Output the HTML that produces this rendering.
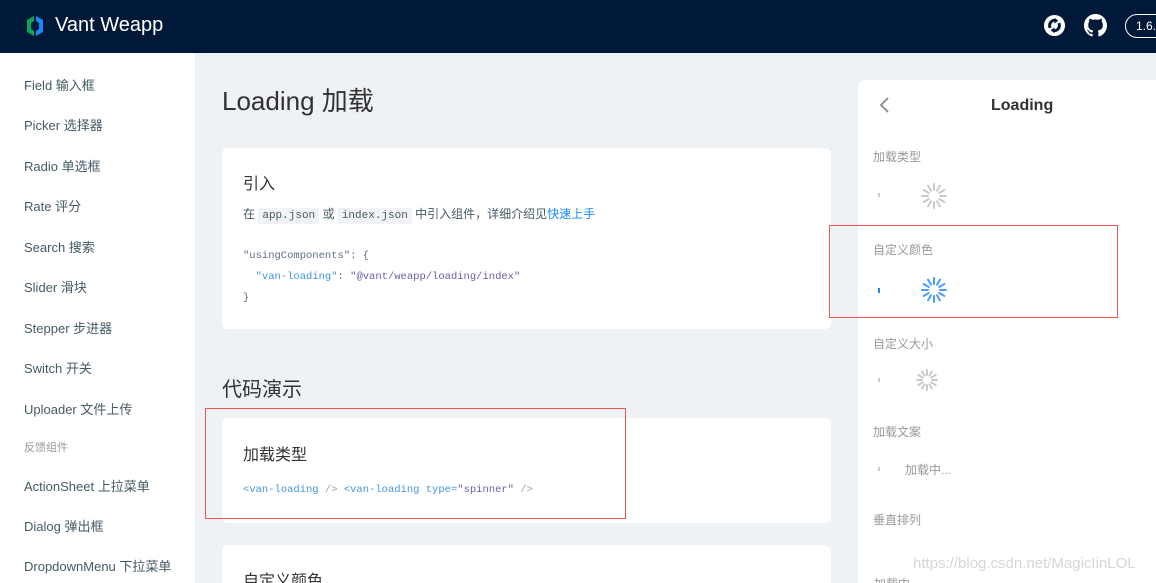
<!DOCTYPE html>
<html style="overflow:hidden;width:1156px;height:583px"><head><meta charset="utf-8"><style>
*{margin:0;padding:0;box-sizing:border-box}
body{width:1156px;height:583px;overflow:hidden;background:#eff2f5;font-family:"Liberation Sans","Noto Sans CJK SC",sans-serif;position:relative;color:#333}
.abs{position:absolute}
.hdr{left:0;top:0;width:1156px;height:53px;background:#001938}
.side{left:0;top:53px;width:195px;height:530px;background:#fff}
.si{position:absolute;left:24px;font-size:13px;color:#455a64;white-space:nowrap}
.card{position:absolute;background:#fff;border-radius:6px}
code{font-family:"Liberation Mono",monospace;font-size:11px;background:#f0f2f5;padding:2px 4px;color:#455a64}
.mono{font-family:"Liberation Mono",monospace;font-size:10.5px}
.t{color:#999;font-size:12px;position:absolute;left:15px}
.red{position:absolute;border:1px solid #f25454}
</style></head><body>
<div class="abs hdr"></div>
<svg class="abs" style="left:25px;top:15px" width="20" height="22" viewBox="0 0 20 22"><path d="M9 1 L2 5 L2 17 L9 21 L9 16 L6 14 L6 8 L9 6Z" fill="#07c160" opacity=".85"/><path d="M11 1 L18 5 L18 17 L11 21 L11 16 L14 14 L14 8 L11 6Z" fill="#1989fa"/></svg>
<div class="abs" style="left:55px;top:14px;color:#fff;font-size:20px">Vant Weapp</div>
<svg class="abs" style="left:1043px;top:14px" width="23" height="23" viewBox="0 0 24 24"><circle cx="12" cy="12" r="11" fill="#fff"/><path d="M12 5a7 7 0 0 0-6 10l3-1a4 4 0 0 1 3-6v2l4-3-4-3z M12 19a7 7 0 0 0 6-10l-3 1a4 4 0 0 1-3 6v-2l-4 3 4 3z" fill="#001938"/></svg>
<svg class="abs" style="left:1084px;top:14px" width="23" height="23" viewBox="0 0 16 16"><path fill="#fff" d="M8 0C3.58 0 0 3.58 0 8c0 3.54 2.29 6.53 5.47 7.59.4.07.55-.17.55-.38 0-.19-.01-.82-.01-1.49-2.01.37-2.53-.49-2.69-.94-.09-.23-.48-.94-.82-1.13-.28-.15-.68-.52-.01-.53.63-.01 1.08.58 1.23.82.72 1.21 1.87.87 2.33.66.07-.52.28-.87.51-1.07-1.78-.2-3.64-.89-3.64-3.95 0-.87.31-1.59.82-2.15-.08-.2-.36-1.02.08-2.12 0 0 .67-.21 2.2.82.64-.18 1.32-.27 2-.27.68 0 1.36.09 2 .27 1.53-1.04 2.2-.82 2.2-.82.44 1.1.16 1.92.08 2.12.51.56.82 1.27.82 2.15 0 3.07-1.87 3.75-3.65 3.95.29.25.54.73.54 1.48 0 1.07-.01 1.93-.01 2.2 0 .21.15.46.55.38A8.013 8.013 0 0 0 16 8c0-4.42-3.58-8-8-8z"/></svg>
<div class="abs" style="left:1125px;top:14px;width:50px;height:24px;border:1px solid #fff;border-radius:12px;color:#fff;font-size:12px;padding:4px 0 0 10px">1.6.</div>
<div class="abs side"></div>
<div class="si" style="top:75px">Field 输入框</div>
<div class="si" style="top:115px">Picker 选择器</div>
<div class="si" style="top:156px">Radio 单选框</div>
<div class="si" style="top:196px">Rate 评分</div>
<div class="si" style="top:237px">Search 搜索</div>
<div class="si" style="top:277px">Slider 滑块</div>
<div class="si" style="top:318px">Stepper 步进器</div>
<div class="si" style="top:358px">Switch 开关</div>
<div class="si" style="top:399px">Uploader 文件上传</div>
<div class="si" style="top:439px;font-size:11px;color:#999">反馈组件</div>
<div class="si" style="top:476px">ActionSheet 上拉菜单</div>
<div class="si" style="top:516px">Dialog 弹出框</div>
<div class="si" style="top:556px">DropdownMenu 下拉菜单</div>

<div class="abs" style="left:222px;top:81px;font-size:26px;color:#323233">Loading 加载</div>
<div class="card" style="left:222px;top:148px;width:609px;height:181px">
 <div class="abs" style="left:21px;top:22px;font-size:16px">引入</div>
 <div class="abs" style="left:21px;top:57px;font-size:12px;color:#455a64;white-space:nowrap">在 <code>app.json</code> 或 <code>index.json</code> 中引入组件，详细介绍见<span style="color:#1989fa">快速上手</span></div>
 <div class="abs mono" style="left:21px;top:98px;color:#5f6c8e;line-height:21px;white-space:pre">"usingComponents": {
  <span style="color:#4097e0">"van-loading"</span>: <span style="color:#6f5ba8">"@vant/weapp/loading/index"</span>
}</div>
</div>
<div class="abs" style="left:222px;top:373px;font-size:20px;color:#323233">代码演示</div>
<div class="card" style="left:222px;top:418px;width:609px;height:105px">
 <div class="abs" style="left:21px;top:23px;font-size:16px">加载类型</div>
 <div class="abs mono" style="left:21px;top:66px;color:#4097e0;white-space:pre">&lt;van-loading <span style="color:#999">/&gt;</span> &lt;van-loading type=<span style="color:#6f5ba8">"spinner"</span> <span style="color:#999">/&gt;</span></div>
</div>
<div class="card" style="left:222px;top:545px;width:609px;height:38px;border-radius:6px 6px 0 0">
 <div class="abs" style="left:21px;top:22px;font-size:16px">自定义颜色</div>
</div>
<div class="red" style="left:205px;top:408px;width:421px;height:111px"></div>

<div class="card" style="left:858px;top:80px;width:298px;height:503px;border-radius:8px 0 0 0">
 <svg class="abs" style="left:20px;top:16px" width="12" height="18" viewBox="0 0 12 18"><path d="M10 2 L3 9 L10 16" stroke="#888" stroke-width="1.8" fill="none"/></svg>
 <div class="abs" style="left:133px;top:17px;font-size:16px;font-weight:bold;color:#323233">Loading</div>
 <div class="t" style="top:68px">加载类型</div>
 <div class="t" style="top:161px">自定义颜色</div>
 <div class="t" style="top:255px">自定义大小</div>
 <div class="t" style="top:343px">加载文案</div>
 <div class="t" style="top:431px">垂直排列</div>
 <div class="abs" style="left:20px;top:113px;width:2px;height:4px;background:#ccc"></div>
 <div class="abs" style="left:20px;top:208px;width:2px;height:5px;background:#1989fa"></div>
 <div class="abs" style="left:20px;top:298px;width:2px;height:4px;background:#ccc"></div>
 <div class="abs" style="left:20px;top:387px;width:2px;height:4px;background:#ccc"></div>
 <div class="abs" style="left:47px;top:381px;font-size:12px;color:#999">加载中...</div>
 <div class="abs" style="left:16px;top:495px;font-size:12px;color:#999">加载中</div>
</div>
<svg class="abs" style="left:920px;top:182px" width="28" height="28" viewBox="-14 -14 28 28"><g stroke="#c8c9cc" stroke-width="2" stroke-linecap="round"><line x1="0" y1="-6" x2="0" y2="-12"/><line x1="0" y1="-6" x2="0" y2="-12" transform="rotate(30)"/><line x1="0" y1="-6" x2="0" y2="-12" transform="rotate(60)"/><line x1="0" y1="-6" x2="0" y2="-12" transform="rotate(90)"/><line x1="0" y1="-6" x2="0" y2="-12" transform="rotate(120)"/><line x1="0" y1="-6" x2="0" y2="-12" transform="rotate(150)"/><line x1="0" y1="-6" x2="0" y2="-12" transform="rotate(180)"/><line x1="0" y1="-6" x2="0" y2="-12" transform="rotate(210)"/><line x1="0" y1="-6" x2="0" y2="-12" transform="rotate(240)"/><line x1="0" y1="-6" x2="0" y2="-12" transform="rotate(270)"/><line x1="0" y1="-6" x2="0" y2="-12" transform="rotate(300)"/><line x1="0" y1="-6" x2="0" y2="-12" transform="rotate(330)"/></g></svg>
<svg class="abs" style="left:920px;top:276px" width="28" height="28" viewBox="-14 -14 28 28"><g stroke="#1989fa" stroke-width="2" stroke-linecap="round" opacity=".8"><line x1="0" y1="-6" x2="0" y2="-12"/><line x1="0" y1="-6" x2="0" y2="-12" transform="rotate(30)"/><line x1="0" y1="-6" x2="0" y2="-12" transform="rotate(60)"/><line x1="0" y1="-6" x2="0" y2="-12" transform="rotate(90)"/><line x1="0" y1="-6" x2="0" y2="-12" transform="rotate(120)"/><line x1="0" y1="-6" x2="0" y2="-12" transform="rotate(150)"/><line x1="0" y1="-6" x2="0" y2="-12" transform="rotate(180)"/><line x1="0" y1="-6" x2="0" y2="-12" transform="rotate(210)"/><line x1="0" y1="-6" x2="0" y2="-12" transform="rotate(240)"/><line x1="0" y1="-6" x2="0" y2="-12" transform="rotate(270)"/><line x1="0" y1="-6" x2="0" y2="-12" transform="rotate(300)"/><line x1="0" y1="-6" x2="0" y2="-12" transform="rotate(330)"/></g></svg>
<svg class="abs" style="left:915px;top:368px" width="24" height="24" viewBox="-12 -12 24 24"><g stroke="#c8c9cc" stroke-width="2" stroke-linecap="round"><line x1="0" y1="-5" x2="0" y2="-10"/><line x1="0" y1="-5" x2="0" y2="-10" transform="rotate(30)"/><line x1="0" y1="-5" x2="0" y2="-10" transform="rotate(60)"/><line x1="0" y1="-5" x2="0" y2="-10" transform="rotate(90)"/><line x1="0" y1="-5" x2="0" y2="-10" transform="rotate(120)"/><line x1="0" y1="-5" x2="0" y2="-10" transform="rotate(150)"/><line x1="0" y1="-5" x2="0" y2="-10" transform="rotate(180)"/><line x1="0" y1="-5" x2="0" y2="-10" transform="rotate(210)"/><line x1="0" y1="-5" x2="0" y2="-10" transform="rotate(240)"/><line x1="0" y1="-5" x2="0" y2="-10" transform="rotate(270)"/><line x1="0" y1="-5" x2="0" y2="-10" transform="rotate(300)"/><line x1="0" y1="-5" x2="0" y2="-10" transform="rotate(330)"/></g></svg>
<div class="abs" style="left:829px;top:225px;width:289px;height:93px;border:1px solid #f25454"></div>
<div class="abs" style="left:913px;top:555px;font-size:15px;color:#d6d6d6;white-space:nowrap">https://blog.csdn.net/MagicIinLOL</div>
</body></html>
